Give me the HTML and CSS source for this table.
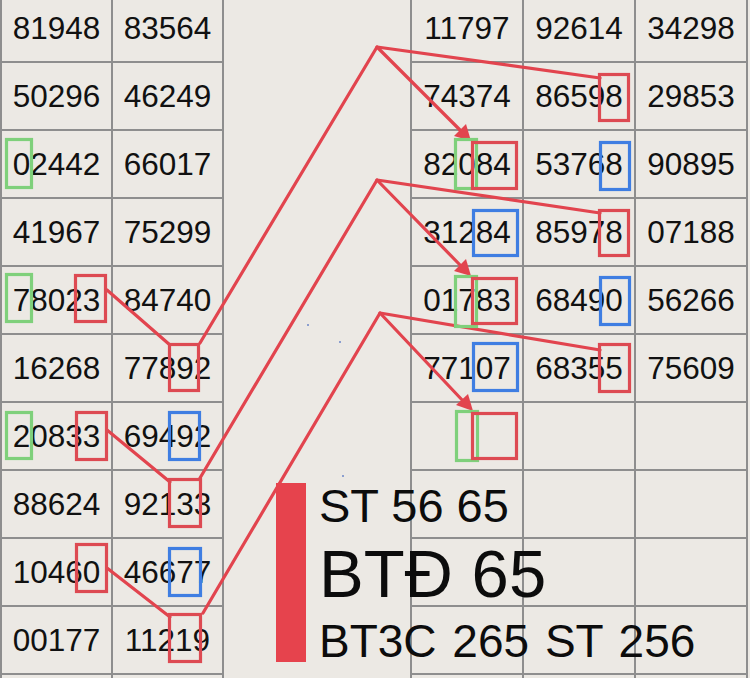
FILE: index.html
```html
<!DOCTYPE html>
<html>
<head>
<meta charset="utf-8">
<link rel="stylesheet" href="styles.css">
</head>
<body>
<div class="page">
  <div class="sheet">
    <div class="grid grid-left">
      <div class="cell">81948</div><div class="cell">83564</div>
      <div class="cell">50296</div><div class="cell">46249</div>
      <div class="cell">02442</div><div class="cell">66017</div>
      <div class="cell">41967</div><div class="cell">75299</div>
      <div class="cell">78023</div><div class="cell">84740</div>
      <div class="cell">16268</div><div class="cell">77892</div>
      <div class="cell">20833</div><div class="cell">69492</div>
      <div class="cell">88624</div><div class="cell">92133</div>
      <div class="cell">10460</div><div class="cell">46677</div>
      <div class="cell">00177</div><div class="cell">11219</div>
      <div class="cell"></div><div class="cell"></div>
    </div>
    <div class="gap-col"></div>
    <div class="grid grid-right">
      <div class="cell">11797</div><div class="cell">92614</div><div class="cell">34298</div>
      <div class="cell">74374</div><div class="cell">86598</div><div class="cell">29853</div>
      <div class="cell">82084</div><div class="cell">53768</div><div class="cell">90895</div>
      <div class="cell">31284</div><div class="cell">85978</div><div class="cell">07188</div>
      <div class="cell">01783</div><div class="cell">68490</div><div class="cell">56266</div>
      <div class="cell">77107</div><div class="cell">68355</div><div class="cell">75609</div>
      <div class="cell"></div><div class="cell"></div><div class="cell"></div>
      <div class="cell"></div><div class="cell"></div><div class="cell"></div>
      <div class="cell"></div><div class="cell"></div><div class="cell"></div>
      <div class="cell"></div><div class="cell"></div><div class="cell"></div>
      <div class="cell"></div><div class="cell"></div><div class="cell"></div>
    </div>
  </div>

  <svg class="marks" width="750" height="678" viewBox="0 0 750 678" xmlns="http://www.w3.org/2000/svg">
    <g class="lines" fill="none" stroke="#e2444e" stroke-width="3.2" stroke-linecap="round" stroke-linejoin="round">
      <polyline points="107,290 170,345"/>
      <polyline points="200,343 377,47 600,78"/>
      <polyline points="377,47 462,132"/>
      <polyline points="107,430 170,482"/>
      <polyline points="200,478 377,180 600,213"/>
      <polyline points="377,180 462,267"/>
      <polyline points="107,568 170,617"/>
      <polyline points="203,613 380,313 600,350"/>
      <polyline points="380,313 464,402"/>
    </g>
    <g fill="#e2444e">
      <polygon points="471,141 454,136 466,124"/>
      <polygon points="471,276 454,271 466,259"/>
      <polygon points="473,411 456,405 468,394"/>
    </g>
    <g fill="none" stroke-width="3.2">
      <!-- left table -->
      <rect x="6.5" y="139.5" width="25" height="48" stroke="#7fd07b"/>
      <rect x="6.5" y="274.5" width="25" height="47" stroke="#7fd07b"/>
      <rect x="75.5" y="275.5" width="30" height="46" stroke="#dd4a52"/>
      <rect x="169.5" y="344.5" width="29" height="46" stroke="#dd4a52"/>
      <rect x="6.5" y="412.5" width="25" height="46" stroke="#7fd07b"/>
      <rect x="76.5" y="412.5" width="30" height="47" stroke="#dd4a52"/>
      <rect x="169.5" y="412.5" width="30" height="47" stroke="#3f7ee2"/>
      <rect x="169.5" y="479.5" width="31" height="47" stroke="#dd4a52"/>
      <rect x="76.5" y="544.5" width="30" height="47" stroke="#dd4a52"/>
      <rect x="169.5" y="548.5" width="31" height="47" stroke="#3f7ee2"/>
      <rect x="169.5" y="614.5" width="31" height="47" stroke="#dd4a52"/>
      <!-- right table -->
      <rect x="599.5" y="74.5" width="29" height="46" stroke="#dd4a52"/>
      <rect x="455.5" y="139.5" width="21" height="49" stroke="#7fd07b"/>
      <rect x="472.5" y="142.5" width="44" height="46" stroke="#dd4a52"/>
      <rect x="600.5" y="142.5" width="29" height="47" stroke="#3f7ee2"/>
      <rect x="473.5" y="210.5" width="44" height="45" stroke="#3f7ee2"/>
      <rect x="599.5" y="210.5" width="29" height="45" stroke="#dd4a52"/>
      <rect x="455.5" y="276.5" width="21" height="50" stroke="#7fd07b"/>
      <rect x="472.5" y="278.5" width="44" height="45" stroke="#dd4a52"/>
      <rect x="600.5" y="277.5" width="29" height="47" stroke="#3f7ee2"/>
      <rect x="473.5" y="343.5" width="44" height="47" stroke="#3f7ee2"/>
      <rect x="599.5" y="344.5" width="30" height="47" stroke="#dd4a52"/>
      <rect x="456.5" y="411.5" width="21" height="49" stroke="#7fd07b"/>
      <rect x="472.5" y="413.5" width="44" height="45" stroke="#dd4a52"/>
    </g>
    <g fill="#6d86c9">
      <circle cx="308" cy="325" r="1"/>
      <circle cx="340" cy="342" r="1"/>
      <circle cx="343" cy="476" r="1"/>
    </g>
  </svg>

  <div class="note">
    <div class="note-bar"></div>
    <div class="note-text">
      <div class="note-line note-line-1">ST 56 65</div>
      <div class="note-line note-line-2">BTĐ 65</div>
      <div class="note-line note-line-3">BT3C 265 ST 256</div>
    </div>
  </div>
</div>
</body>
</html>
```

FILE: styles.css
```css
html, body {
  margin: 0;
  padding: 0;
  background: #ece9e4;
}

.page {
  position: relative;
  width: 750px;
  height: 678px;
  overflow: hidden;
  background: #ece9e4;
  font-family: "Liberation Sans", Arial, sans-serif;
  color: #111;
}

.sheet {
  display: flex;
  align-items: flex-start;
  margin-top: -5px;
}

.grid {
  display: grid;
  grid-auto-rows: 66px;
  gap: 2px;
  background: #8e8e8e;
  padding: 0 2px 2px 2px;
}

.grid-left {
  grid-template-columns: 109px 109px;
}

.grid-right {
  grid-template-columns: 110px 110px 110px;
}

.gap-col {
  width: 186px;
  flex: 0 0 186px;
}

.cell {
  background: #ece9e4;
  display: flex;
  align-items: center;
  justify-content: center;
  font-size: 31.5px;
  line-height: 1;
  padding-top: 2px;
  box-sizing: border-box;
}

.marks {
  position: absolute;
  left: 0;
  top: 0;
}

.note {
  position: absolute;
  left: 276px;
  top: 483px;
  display: flex;
  align-items: flex-start;
}

.note-bar {
  width: 30px;
  height: 179px;
  background: #e6434d;
}

.note-text {
  margin-left: 13px;
  color: #0c0c0c;
  white-space: nowrap;
}

.note-line-1 {
  font-size: 47px;
  line-height: 46px;
}

.note-line-2 {
  font-size: 67px;
  line-height: 90px;
}

.note-line-3 {
  font-size: 46px;
  line-height: 44px;
  word-spacing: 3px;
}
```
